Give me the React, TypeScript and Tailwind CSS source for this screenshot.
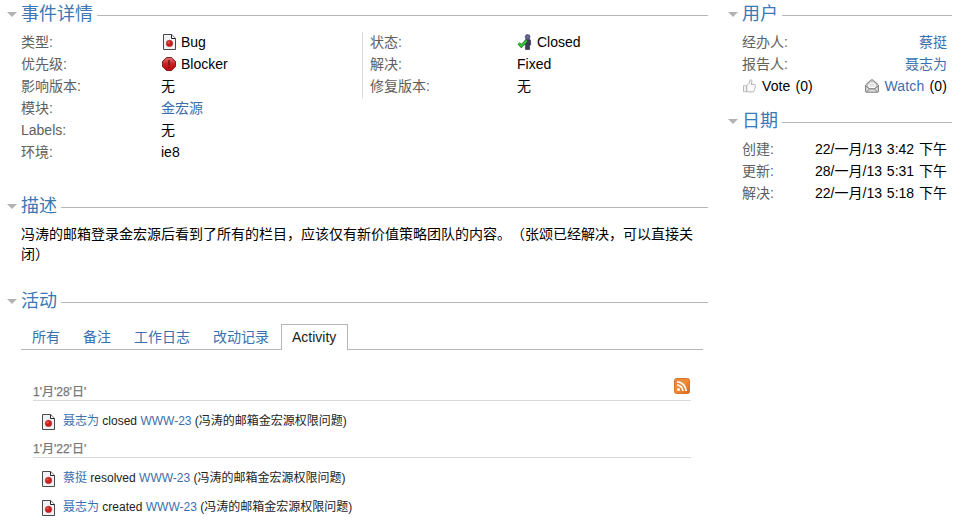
import type { ReactNode } from "react";

const link = "text-[#3b6fae]";

function BugIcon() {
  return (
    <svg width="13" height="16" viewBox="0 0 13 16" className="block shrink-0">
      <path d="M.5.5H8.7L12.5 4.3V15.5H.5Z" fill="#f1f1f6" stroke="#4a4a4a" />
      <path d="M8.5.7V4.5H12.4" fill="#fff" stroke="#222" />
      <circle cx="6.5" cy="9.4" r="3.2" fill="#cf1c1c" stroke="#a32020" strokeWidth=".6" />
      <circle cx="5.6" cy="8.4" r="1.2" fill="#e8554c" />
    </svg>
  );
}

function BlockerIcon() {
  return (
    <svg width="14" height="14" viewBox="0 0 14 14" className="block shrink-0">
      <defs>
        <linearGradient id="blocker" x1="0" y1="0" x2="0" y2="1">
          <stop offset="0" stopColor="#e27070" />
          <stop offset=".5" stopColor="#cc2020" />
          <stop offset="1" stopColor="#c00808" />
        </linearGradient>
      </defs>
      <path d="M4.4.5H9.6L13.5 4.4V9.6L9.6 13.5H4.4L.5 9.6V4.4Z" fill="url(#blocker)" stroke="#6e1414" strokeWidth=".9" />
      <path d="M7 3V8.2M7 9.5V11" stroke="#5c1414" strokeWidth="1.4" />
    </svg>
  );
}

function ClosedIcon() {
  return (
    <svg width="16" height="16" viewBox="0 0 16 16" className="block shrink-0">
      <path d="M8 6.5Q8 5.4 9.3 5.4H12.2Q13.6 5.4 13.6 6.8V11H12.6V15.4H8.4V11Z" fill="#3c3b58" stroke="#28273d" strokeWidth=".6" />
      <circle cx="10.6" cy="3" r="2.4" fill="#68689c" stroke="#37365a" strokeWidth=".7" />
      <path d="M1.6 9.2L4.3 12L9.7 6.6" fill="none" stroke="#14751b" strokeWidth="3" />
      <path d="M1.6 9.2L4.3 12L9.7 6.6" fill="none" stroke="#3fc743" strokeWidth="1.7" />
    </svg>
  );
}

function ThumbIcon() {
  return (
    <svg width="13" height="14" viewBox="0 0 13 14" className="block shrink-0">
      <path
        d="M3.7 6.6C5.5 5.4 6.8 3.8 7 1.4C7.2.3 8.9.4 8.9 2.2C8.9 3.4 8.5 4.4 8.1 5.3H11.4C12.6 5.5 12.7 6.7 12 7.2C12.6 7.9 12.4 8.9 11.7 9.3C12.1 10.1 11.8 10.9 11.1 11.2C11.3 12.2 10.6 12.9 9.8 12.9H5.5L3.7 12.2Z"
        fill="#fafafa"
        stroke="#a9a9a9"
        strokeWidth=".9"
      />
      <path d="M.5 6.8H3.5V12.8H.5Z" fill="#f4f4f4" stroke="#b3b3b3" strokeWidth=".9" />
    </svg>
  );
}

function EnvelopeIcon() {
  return (
    <svg width="14" height="14" viewBox="0 0 14 14" className="block shrink-0">
      <path d="M.6 6L5.6 1.3Q7 .2 8.4 1.3L13.4 6V12.5Q13.4 13.2 12.7 13.2H1.3Q.6 13.2.6 12.5Z" fill="#dedede" stroke="#777" />
      <path d="M2.7 8V5.2L5.5 3H8.5L11.3 5.2V8L9 10H5Z" fill="#fff" stroke="#999" strokeWidth=".7" />
      <path d="M4.5 5.4H9.5M4 7.1H10" stroke="#bbb" strokeWidth=".7" />
      <path d="M1 7.2L4.6 10L1.2 13M13 7.2L9.4 10L12.8 13M4.6 9.7H9.4" fill="none" stroke="#777" strokeWidth=".9" />
    </svg>
  );
}

function FeedIcon() {
  return (
    <svg width="16" height="16" viewBox="0 0 16 16" className="block shrink-0">
      <defs>
        <linearGradient id="feed" x1="0" y1="0" x2="1" y2="1">
          <stop offset="0" stopColor="#e88a3c" />
          <stop offset=".5" stopColor="#f08a35" />
          <stop offset="1" stopColor="#d9651c" />
        </linearGradient>
      </defs>
      <rect x=".5" y=".5" width="15" height="15" rx="2" fill="url(#feed)" stroke="#d9752f" />
      <circle cx="4.5" cy="11.6" r="1.5" fill="#fff" />
      <path d="M3 7.1A5.9 5.9 0 0 1 8.9 13M3 3.9A9.1 9.1 0 0 1 12.1 13" fill="none" stroke="#fff" strokeWidth="1.8" />
    </svg>
  );
}

function Heading({ children }: { children: ReactNode }) {
  return (
    <div className="flex h-[31px] items-start">
      <svg width="10" height="5" viewBox="0 0 10 5" className="mt-3 mr-1 block shrink-0">
        <path d="M0 0H10L5 5Z" fill="#b3b3b3" />
      </svg>
      <h2 className="h-[28px] text-[18px] leading-[28px] whitespace-nowrap text-[#3c78b5]">{children}</h2>
      <div className="mt-[15px] ml-1 h-px grow bg-[#b7b7b7]" />
    </div>
  );
}

function Field({ label, width, children }: { label: string; width: string; children: ReactNode }) {
  return (
    <div className="flex h-[22px] leading-[22px] whitespace-nowrap">
      <span className={`${width} shrink-0 text-[#606060]`}>{label}</span>
      <span className="flex h-[22px] items-center">{children}</span>
    </div>
  );
}

function SideField({ label, children }: { label: string; children: ReactNode }) {
  return (
    <div className="flex h-[22px] justify-between leading-[22px] whitespace-nowrap">
      <span className="text-[#606060]">{label}</span>
      <span className="[word-spacing:1px]">{children}</span>
    </div>
  );
}

function DateHeader({ children }: { children: ReactNode }) {
  return (
    <h3 className="h-[18px] border-b border-[#d9d9d9] text-[12px] leading-[18px] text-[#777] [-webkit-text-stroke:0.25px_#777]">
      {children}
    </h3>
  );
}

function Entry({ user, action }: { user: string; action: string }) {
  return (
    <div className="flex h-[29px] items-center pl-[9px] text-[12px] leading-[18px] whitespace-nowrap text-[#222]">
      <div className="mt-[3px]">
        <BugIcon />
      </div>
      <p className="ml-2">
        <a className={link}>{user}</a> {action} <a className={link}>WWW-23</a> (冯涛的邮箱金宏源权限问题)
      </p>
    </div>
  );
}

export default function App() {
  return (
    <main className="flex h-[523px] w-[958px] gap-5 overflow-hidden bg-white pl-[7px] font-['Liberation_Sans','Noto_Sans_CJK_SC',sans-serif] text-[14px] text-black [text-spacing-trim:space-all]">
      <div className="w-[701px] shrink-0">
        <section className="h-[192px]">
          <Heading>事件详情</Heading>
          <div className="flex pl-[14px]">
            <div className="w-[341px]">
              <Field width="w-[140px]" label="类型:">
                <span className="ml-[2px]">
                  <BugIcon />
                </span>
                <span className="ml-[5px]">Bug</span>
              </Field>
              <Field width="w-[140px]" label="优先级:">
                <span className="ml-px">
                  <BlockerIcon />
                </span>
                <span className="ml-[5px]">Blocker</span>
              </Field>
              <Field width="w-[140px]" label="影响版本:">无</Field>
              <Field width="w-[140px]" label="模块:">
                <a className={link}>金宏源</a>
              </Field>
              <Field width="w-[140px]" label="Labels:">无</Field>
              <Field width="w-[140px]" label="环境:">ie8</Field>
            </div>
            <div className="mt-px h-[66px] border-l border-[#d9d9d9] pl-[7px]">
              <div className="-mt-px">
                <Field width="w-[147px]" label="状态:">
                  <ClosedIcon />
                  <span className="ml-1">Closed</span>
                </Field>
                <Field width="w-[147px]" label="解决:">Fixed</Field>
                <Field width="w-[147px]" label="修复版本:">无</Field>
              </div>
            </div>
          </div>
        </section>

        <section className="h-[95px]">
          <Heading>描述</Heading>
          <p className="pt-px pl-[14px] leading-5">
            冯涛的邮箱登录金宏源后看到了所有的栏目，应该仅有新价值策略团队的内容。（张颂已经解决，可以直接关闭）
          </p>
        </section>

        <section>
          <Heading>活动</Heading>
          <div className="mt-[6px] mr-[5px] ml-[14px] flex h-[26px] border-b border-[#b7b7b7] leading-[26px]">
            <a className={`ml-[11px] ${link}`}>所有</a>
            <a className={`ml-[23px] ${link}`}>备注</a>
            <a className={`ml-[23px] ${link}`}>工作日志</a>
            <a className={`ml-[23px] ${link}`}>改动记录</a>
            <a className="ml-3 h-[26px] w-[67px] border border-b-0 border-[#b7b7b7] bg-white px-[10px] leading-[25px] text-[#222]">
              Activity
            </a>
          </div>
          <div className="mr-[17px] ml-[26px] pt-[28px]">
            <div className="flex h-[5px] justify-end pr-px">
              <FeedIcon />
            </div>
            <DateHeader>1'月'28'日'</DateHeader>
            <div className="pt-[5px]">
              <Entry user="聂志为" action="closed" />
            </div>
            <div className="pt-[5px]">
              <DateHeader>1'月'22'日'</DateHeader>
            </div>
            <div className="pt-[5px]">
              <Entry user="蔡挺" action="resolved" />
              <Entry user="聂志为" action="created" />
            </div>
          </div>
        </section>
      </div>

      <aside className="w-[224px] shrink-0">
        <section className="h-[107px]">
          <Heading>用户</Heading>
          <div className="pr-[5px] pl-[14px]">
            <SideField label="经办人:">
              <a className={link}>蔡挺</a>
            </SideField>
            <SideField label="报告人:">
              <a className={link}>聂志为</a>
            </SideField>
            <div className="flex h-[22px] items-center justify-between leading-[22px] whitespace-nowrap [word-spacing:1px]">
              <span className="flex items-center gap-[6px] pl-px">
                <ThumbIcon />
                <span className="tracking-[0.1px]">Vote (0)</span>
              </span>
              <span className="flex items-center gap-[5px]">
                <EnvelopeIcon />
                <span className="tracking-[0.15px]">
                  <a className={link}>Watch</a> (0)
                </span>
              </span>
            </div>
          </div>
        </section>
        <section>
          <Heading>日期</Heading>
          <div className="pr-[5px] pl-[14px]">
            <SideField label="创建:">22/一月/13 3:42 下午</SideField>
            <SideField label="更新:">28/一月/13 5:31 下午</SideField>
            <SideField label="解决:">22/一月/13 5:18 下午</SideField>
          </div>
        </section>
      </aside>
    </main>
  );
}
